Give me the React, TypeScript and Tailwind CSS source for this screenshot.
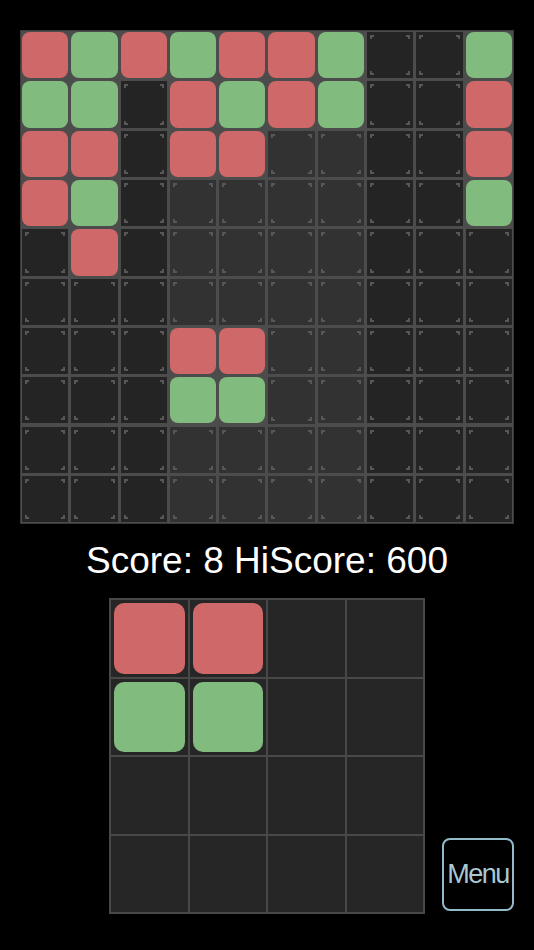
import React from 'react';

type Tile = 'r' | 'g' | '.';

const BOARD: string[] = [
  'rgrgrrg..g',
  'gg.rgrg..r',
  'rr.rr....r',
  'rg.......g',
  '.r........',
  '..........',
  '...rr.....',
  '...gg.....',
  '..........',
  '..........',
];

const PREVIEW: string[] = ['rr..', 'gg..', '....', '....'];

const Corners: React.FC = () => (
  <>
    <span className="absolute left-[3px] top-[3px] w-[4px] h-[4px] border-l-2 border-t-2 border-[#575757]" />
    <span className="absolute right-[3px] top-[3px] w-[4px] h-[4px] border-r-2 border-t-2 border-[#575757]" />
    <span className="absolute left-[3px] bottom-[3px] w-[4px] h-[4px] border-l-2 border-b-2 border-[#575757]" />
    <span className="absolute right-[3px] bottom-[3px] w-[4px] h-[4px] border-r-2 border-b-2 border-[#575757]" />
  </>
);

const BoardCell: React.FC<{ tile: Tile; col: number }> = ({ tile, col }) => {
  const light = col >= 3 && col <= 6;
  if (tile === 'r') return <div className="aspect-square rounded-[8px] bg-[#cf6868]" />;
  if (tile === 'g') return <div className="aspect-square rounded-[8px] bg-[#82bb7e]" />;
  return (
    <div className={`relative aspect-square ${light ? 'bg-[#323232]' : 'bg-[#242424]'}`}>
      <Corners />
    </div>
  );
};

const PreviewCell: React.FC<{ tile: Tile }> = ({ tile }) => (
  <div className="aspect-square bg-[#262626] p-[3px]">
    {tile === 'r' && <div className="w-full h-full rounded-[10px] bg-[#cf6868]" />}
    {tile === 'g' && <div className="w-full h-full rounded-[10px] bg-[#82bb7e]" />}
  </div>
);

export default function App() {
  return (
    <div className="w-[534px] h-[950px] bg-black flex flex-col items-center pt-[30px] font-['Liberation_Sans',Arial,sans-serif]">
      <div className="w-[494px] h-[494px] bg-[#4c4c4c] border border-[#3a3a3a] p-[1px] grid grid-cols-10 gap-[3px]">
        {BOARD.map((row, r) =>
          row.split('').map((t, c) => <BoardCell key={`${r}-${c}`} tile={t as Tile} col={c} />)
        )}
      </div>

      <div className="mt-[18px] text-white text-[37px] leading-[37px]">Score: 8 HiScore: 600</div>

      <div className="mt-[19px] w-full px-[20px] grid grid-cols-[1fr_316px_1fr]">
        <div />
        <div className="w-[316px] bg-[#484848] p-[2px] grid grid-cols-4 gap-[2px]">
          {PREVIEW.map((row, r) =>
            row.split('').map((t, c) => <PreviewCell key={`${r}-${c}`} tile={t as Tile} />)
          )}
        </div>
        <div className="flex items-end justify-end pb-[3px]">
          <button className="w-[72px] h-[73px] rounded-[8px] border-2 border-[#93bccb] bg-black text-[#a9c8d3] text-[27px] tracking-[-1.5px] flex items-center justify-center">
            Menu
          </button>
        </div>
      </div>
    </div>
  );
}
